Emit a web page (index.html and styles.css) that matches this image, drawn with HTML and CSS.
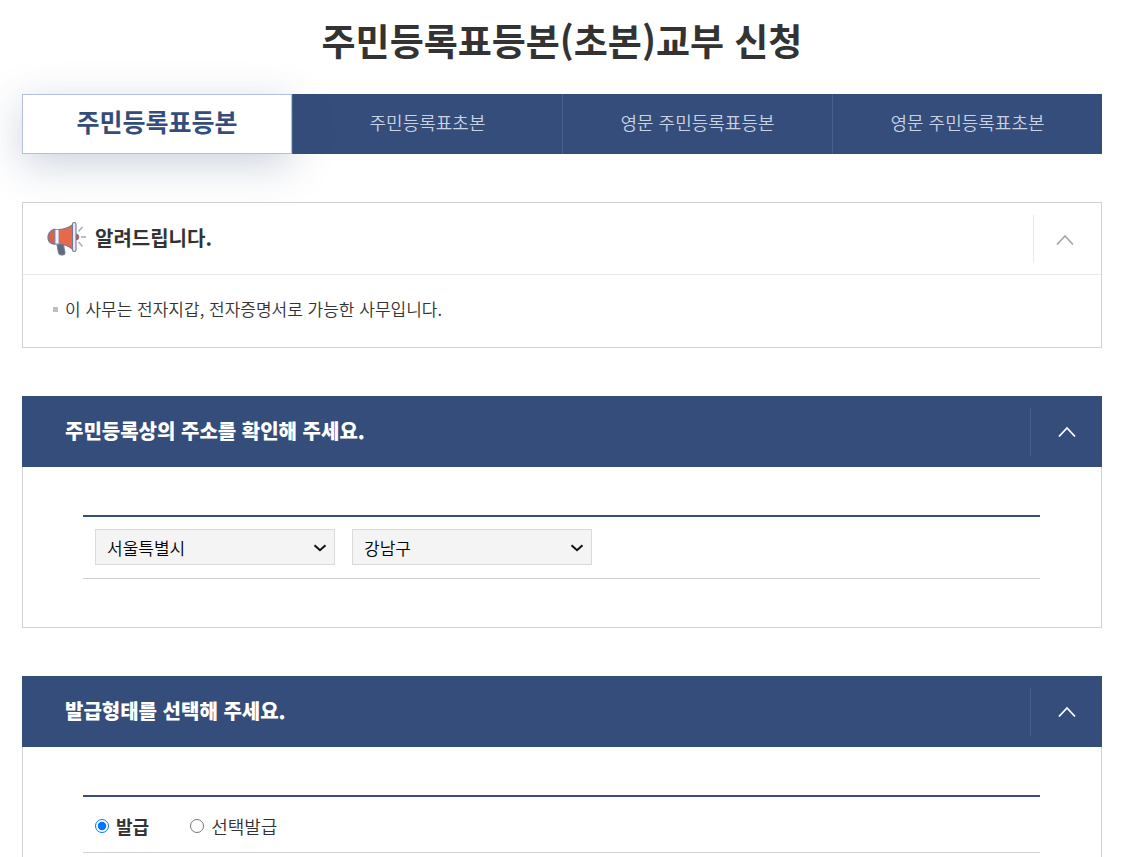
FILE: index.html
```html
<!DOCTYPE html>
<html lang="ko">
<head>
<meta charset="utf-8">
<meta name="viewport" content="width=device-width, initial-scale=1">
<title>주민등록표등본(초본)교부 신청</title>
<link rel="stylesheet" href="styles.css">
</head>
<body>
<main class="page">
  <h1 class="page-title">주민등록표등본(초본)교부 신청</h1>

  <nav class="tabs">
    <a class="tab tab-active" href="#" aria-current="page">주민등록표등본</a>
    <a class="tab" href="#">주민등록표초본</a>
    <a class="tab" href="#">영문 주민등록표등본</a>
    <a class="tab" href="#">영문 주민등록표초본</a>
  </nav>

  <section class="notice">
    <header class="notice-head">
      <svg class="megaphone" viewBox="0 0 40 36" aria-hidden="true">
        <path d="M9.500 21.500h6.500l2 10q.3 2.500-2 2.500h-2q-2 0-2.500-2z" fill="#5f6b7c" stroke="#7a8097"/>
        <path d="M8 8.500H6.500Q1 11 1 16.500t5.500 6.500H8z" fill="#dd6245" stroke="#737895" stroke-width="1.300"/>
        <path d="M12 8.500q8-.5 14-5v25q-6-5-14-5.500z" fill="#e8694a" stroke="#737895" stroke-width="1.200"/>
        <path d="M8 8.500h4v14.500H8z" fill="#f3f3f8" stroke="#8b8fa9"/>
        <path d="M29 13q3 0 3 3t-3 3z" fill="#cf543c" stroke="#8a7488" stroke-width=".7"/>
        <rect x="25.500" y="1.500" width="3.500" height="29" rx="1.700" fill="#e9eaf2" stroke="#737895" stroke-width="1.100"/>
        <path d="M31.500 10.500l4-4.500M34 16h5M31.500 21l4 4.500" fill="none" stroke="#a6a8bc" stroke-width="1.400"/>
      </svg>
      <h2 class="notice-title">알려드립니다.</h2>
      <button class="toggle" type="button" aria-label="알림 접기">
        <svg class="chevron" viewBox="0 0 18 12" aria-hidden="true"><path d="M1 10.500L9 2l8 8.500"/></svg>
      </button>
    </header>
    <ul class="notice-list">
      <li>이 사무는 전자지갑, 전자증명서로 가능한 사무입니다.</li>
    </ul>
  </section>

  <section class="panel">
    <header class="panel-head">
      <h2 class="panel-title">주민등록상의 주소를 확인해 주세요.</h2>
      <button class="toggle" type="button" aria-label="주소 접기">
        <svg class="chevron" viewBox="0 0 18 12" aria-hidden="true"><path d="M1 10.500L9 2l8 8.500"/></svg>
      </button>
    </header>
    <div class="panel-body">
      <div class="form-row form-row-select">
        <div class="select-box">
          <select class="select" aria-label="시도"><option>서울특별시</option></select>
          <svg class="select-arrow" viewBox="0 0 14 8" aria-hidden="true"><path d="M1.500 1.200L7 6.200l5.500-5"/></svg>
        </div>
        <div class="select-box">
          <select class="select" aria-label="시군구"><option>강남구</option></select>
          <svg class="select-arrow" viewBox="0 0 14 8" aria-hidden="true"><path d="M1.500 1.200L7 6.200l5.500-5"/></svg>
        </div>
      </div>
    </div>
  </section>

  <section class="panel panel-last">
    <header class="panel-head">
      <h2 class="panel-title">발급형태를 선택해 주세요.</h2>
      <button class="toggle" type="button" aria-label="발급형태 접기">
        <svg class="chevron" viewBox="0 0 18 12" aria-hidden="true"><path d="M1 10.500L9 2l8 8.500"/></svg>
      </button>
    </header>
    <div class="panel-body">
      <div class="form-row form-row-radio">
        <label class="choice"><input type="radio" name="issue" checked><span>발급</span></label>
        <label class="choice"><input type="radio" name="issue"><span>선택발급</span></label>
      </div>
    </div>
  </section>
</main>
</body>
</html>
```

FILE: styles.css
```css
* {
  box-sizing: border-box;
}

body {
  margin: 0;
  background: #fff;
  color: #333;
  font-family: "Noto Sans CJK KR", sans-serif;
  font-weight: 350;
}

.page {
  display: flex;
  flex-direction: column;
  min-height: 100vh;
  padding: 12px 28px 0 22px;
}

.page-title {
  margin: 0 0 26px;
  font-size: 37px;
  font-weight: 700;
  line-height: 56px;
  text-align: center;
}

.tabs {
  display: grid;
  grid-template-columns: repeat(4, 1fr);
  margin-bottom: 48px;
  background: #344d7a;
}

.tab {
  height: 60px;
  border-left: 1px solid #4a608a;
  color: #c9d2e3;
  font-size: 18px;
  line-height: 56px;
  text-align: center;
  text-decoration: none;
}

.tab-active {
  border: 1px solid #b4bfd9;
  background: #fff;
  box-shadow: 0 10px 40px rgba(52, 77, 122, 0.25);
  color: #344d7a;
  font-size: 25px;
  font-weight: 700;
  line-height: 52px;
}

.notice {
  margin-bottom: 48px;
  border: 1px solid #d2d2d2;
  background: #fff;
}

.notice-head {
  display: flex;
  align-items: center;
  height: 72px;
  padding-left: 24px;
  border-bottom: 1px solid #ebebeb;
}

.megaphone {
  width: 40px;
  height: 36px;
}

.notice-title {
  flex: 1;
  margin: 0 0 2px 8px;
  font-size: 20px;
  font-weight: 700;
  line-height: 30px;
}

.toggle {
  display: flex;
  align-items: center;
  justify-content: center;
  width: 68px;
  height: 48px;
  padding: 2px 6px 0 0;
  border: 0;
  border-left: 1px solid #ebebeb;
  background: none;
  color: #a8a8a8;
}

.chevron {
  width: 18px;
  height: 12px;
  fill: none;
  stroke: currentColor;
  stroke-width: 1.8;
}

.notice-list {
  margin: 0;
  padding: 20px 30px 24px;
  list-style: none;
}

.notice-list li {
  display: flex;
  align-items: center;
  gap: 7px;
  font-size: 17px;
  line-height: 28px;
}

.notice-list li::before {
  content: "";
  width: 5px;
  height: 5px;
  background: #bfbfbf;
}

.panel {
  margin-bottom: 48px;
}

.panel-head {
  display: flex;
  align-items: center;
  height: 71px;
  padding-left: 43px;
  background: #344d7a;
  color: #fff;
}

.panel-title {
  flex: 1;
  margin: 0 0 1px;
  font-size: 20px;
  font-weight: 900;
  line-height: 30px;
}

.panel-head .toggle {
  width: 72px;
  padding: 0;
  border-left-color: #4a608a;
  color: #fff;
}

.panel-body {
  padding: 48px 61px 48px 60px;
  border: 1px solid #d2d2d2;
  border-top: 0;
}

.panel-last {
  display: flex;
  flex: 1;
  flex-direction: column;
  margin-bottom: 0;
}

.panel-last .panel-body {
  flex: 1;
  padding-bottom: 0;
  border-bottom: 0;
}

.form-row {
  display: flex;
  align-items: center;
  padding: 12px;
  border-top: 2px solid #344d7a;
  border-bottom: 1px solid #d2d2d2;
}

.form-row-select {
  gap: 17px;
  padding-bottom: 13px;
}

.form-row-radio {
  gap: 41px;
  height: 58px;
  padding: 2px 12px 0;
}

.select-box {
  position: relative;
  width: 240px;
}

.select {
  display: block;
  width: 100%;
  height: 36px;
  padding: 0 32px 0 11px;
  border: 1px solid #dadada;
  border-radius: 0;
  appearance: none;
  background: #f4f4f4;
  color: #000;
  font-family: inherit;
  font-size: 17px;
  font-weight: inherit;
}

.select-arrow {
  position: absolute;
  top: 15px;
  right: 8px;
  width: 14px;
  height: 8px;
  fill: none;
  stroke: #111;
  stroke-width: 2;
  pointer-events: none;
}

.choice {
  display: flex;
  align-items: center;
  gap: 7px;
  font-size: 18px;
  line-height: 28px;
}

.choice input {
  width: 14px;
  height: 14px;
  margin: 0;
}

.choice input:checked + span {
  font-weight: 700;
}
```
